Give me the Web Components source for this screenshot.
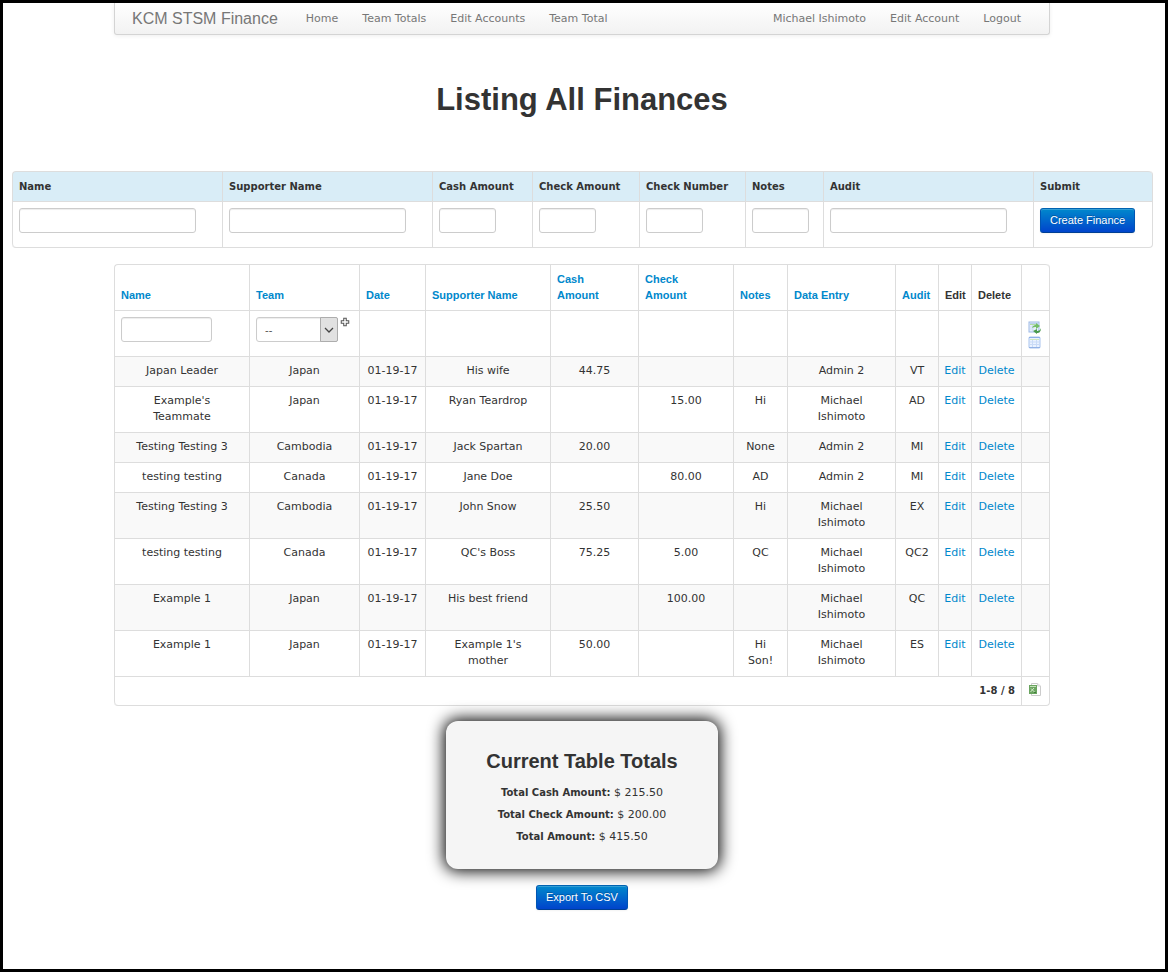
<!DOCTYPE html>
<html lang="en">
<head>
<meta charset="utf-8">
<title>KCM STSM Finance</title>
<style>
  html { background: #000; }
  body {
    margin: 0;
    font: 11px/16px "DejaVu Sans", sans-serif;
    color: #333;
  }
</style>
</head>
<body>
<finance-page>
  <nav-bar slot="nav" brand="KCM STSM Finance">
    <nav-link>Home</nav-link>
    <nav-link>Team Totals</nav-link>
    <nav-link>Edit Accounts</nav-link>
    <nav-link>Team Total</nav-link>
    <nav-link slot="account">Michael Ishimoto</nav-link>
    <nav-link slot="account">Edit Account</nav-link>
    <nav-link slot="account">Logout</nav-link>
  </nav-bar>
  <span slot="title">Listing All Finances</span>
  <finance-form></finance-form>
  <finance-grid></finance-grid>
  <totals-card>
    <span slot="title">Current Table Totals</span>
    <total-line label="Total Cash Amount:">$ 215.50</total-line>
    <total-line label="Total Check Amount:">$ 200.00</total-line>
    <total-line label="Total Amount:">$ 415.50</total-line>
  </totals-card>
  <primary-button>Export To CSV</primary-button>
</finance-page>

<script>
const base = `
  *, *::before, *::after { box-sizing: border-box; }
  a { color: #08c; text-decoration: none; }
`;
const tableStyles = `
  table {
    width: 100%;
    table-layout: fixed;
    border-collapse: separate;
    border-spacing: 0;
    border: 1px solid #ddd;
    border-left: 0;
    border-top: 0;
    border-radius: 4px;
  }
  th, td {
    padding: 6px 6px 7px;
    border-left: 1px solid #ddd;
    border-top: 1px solid #ddd;
    vertical-align: top;
  }
  th { text-align: left; }
  thead tr:first-child > :first-child { border-top-left-radius: 4px; }
  thead tr:first-child > :last-child { border-top-right-radius: 4px; }
  table > :last-child tr:last-child > :first-child { border-bottom-left-radius: 4px; }
  table > :last-child tr:last-child > :last-child { border-bottom-right-radius: 4px; }
  input, select {
    display: block;
    height: 25px;
    max-width: 100%;
    margin: 0;
    padding: 3px 5px;
    border: 1px solid #ccc;
    border-radius: 3px;
    background: #fff;
    box-shadow: inset 0 1px 1px rgba(0,0,0,.075);
    color: #555;
    font: 11px/16px "Liberation Sans", Arial, sans-serif;
  }
`;

class BaseElement extends HTMLElement {
  connectedCallback() {
    if (this.shadowRoot) return;
    this.attachShadow({ mode: "open" }).innerHTML =
      `<style>${base}${this.styles()}</style>${this.markup()}`;
  }
}

customElements.define("finance-page", class extends BaseElement {
  styles() { return `
    :host {
      display: flex;
      flex-direction: column;
      align-items: center;
      box-sizing: border-box;
      min-height: 100vh;
      padding: 0 13px 56px 9px;
      border: 3px solid #000;
      background: #fff;
    }
    h1 {
      margin: 45px 0 51px;
      font: bold 31px/40px "Liberation Sans", Arial, sans-serif;
    }
  `; }
  markup() { return `
    <slot name="nav"></slot>
    <h1><slot name="title"></slot></h1>
    <slot></slot>
  `; }
});

customElements.define("nav-bar", class extends BaseElement {
  styles() { return `
    :host { display: block; width: 100%; max-width: 936px; }
    nav {
      display: flex;
      align-items: center;
      height: 32px;
      padding: 0 28px 0 17px;
      border: 1px solid #d4d4d4;
      border-top: 0;
      border-radius: 0 0 3px 3px;
      background: linear-gradient(#fff, #f2f2f2);
      box-shadow: 0 1px 4px rgba(0,0,0,.065);
    }
    .brand {
      margin-right: 28px;
      color: #777;
      font: 16px/20px "Liberation Sans", Arial, sans-serif;
    }
    .links { display: flex; gap: 24px; }
    .account { margin-left: auto; }
  `; }
  markup() { return `
    <nav>
      <a class="brand" href="#">${this.getAttribute("brand")}</a>
      <div class="links"><slot></slot></div>
      <div class="links account"><slot name="account"></slot></div>
    </nav>
  `; }
});

customElements.define("nav-link", class extends BaseElement {
  styles() { return `:host { display: block; } a { color: #777; }`; }
  markup() { return `<a href="#"><slot></slot></a>`; }
});

customElements.define("primary-button", class extends BaseElement {
  styles() { return `
    :host { display: block; }
    button {
      display: block;
      height: 25px;
      padding: 0 9px 1px;
      border: 1px solid;
      border-color: #0063b1 #0055b3 #003f94;
      border-radius: 3px;
      background: linear-gradient(#08c, #04c);
      box-shadow: inset 0 1px 0 rgba(255,255,255,.2), 0 1px 2px rgba(0,0,0,.05);
      color: #fff;
      font: 11px/16px "Liberation Sans", Arial, sans-serif;
      text-shadow: 0 -1px 0 rgba(0,0,0,.25);
      white-space: nowrap;
    }
  `; }
  markup() { return `<button type="button"><slot></slot></button>`; }
});

const formFields = [
  ["Name", 210, "wide"],
  ["Supporter Name", 210, "wide"],
  ["Cash Amount", 100, "small"],
  ["Check Amount", 107, "small"],
  ["Check Number", 106, "small"],
  ["Notes", 78, "small"],
  ["Audit", 210, "wide"],
];

customElements.define("finance-form", class extends BaseElement {
  styles() { return `
    ${tableStyles}
    :host { display: block; width: 100%; margin-bottom: 16px; }
    form { margin: 0; }
    th {
      padding-top: 7px;
      padding-bottom: 6px;
      background: #d9edf7;
      font-size: 10px;
      white-space: nowrap;
    }
    td { padding-bottom: 14px; }
    .wide { width: 177px; }
    .small { width: 57px; }
  `; }
  markup() { return `
    <form>
      <table>
        <colgroup>
          ${formFields.map(f => `<col style="width:${f[1]}px">`).join("")}
          <col style="width:119px">
        </colgroup>
        <thead><tr>
          ${formFields.map((f, i) => `<th scope="col"><label for="f${i}">${f[0]}</label></th>`).join("")}
          <th scope="col">Submit</th>
        </tr></thead>
        <tbody><tr>
          ${formFields.map((f, i) => `<td><input type="text" id="f${i}" class="${f[2]}"></td>`).join("")}
          <td><primary-button>Create Finance</primary-button></td>
        </tr></tbody>
      </table>
    </form>
  `; }
});

const icons = {
  filter: `
    <rect x="1" y="1" width="10" height="10" fill="#e6effb" stroke="#9db9e6"/>
    <path d="M2 2h8v2H2z" fill="#b9d0f0"/>
    <path d="M2 3.500h6" stroke="#b4dba6"/>
    <path d="M2 6h4M2 8h4M4.500 4v6" stroke="#cfdff5" fill="none"/>
    <path d="M4 7C5 4 7 4 8 4V2l4 3-4 3V6C7 6 5 6 4 7z" fill="#74be68"/>
    <path d="M13 7c-1 3-3 3-4 3V8l-4 2 4 3v-1c2 0 4-1 4-5z" fill="#4a9a4c"/>`,
  reset: `
    <rect x="1" y="1" width="11" height="11" rx="1" fill="#eaf2ff" stroke="#a9c4ee"/>
    <path d="M1 1.500h11" stroke="#8db0e8"/>
    <path d="M2 3.500h9" stroke="#cfe6bf"/>
    <path d="M2 6h9M2 8.500h9M4.500 4v7M8.500 4v7" stroke="#c9dbf7" fill="none"/>
    <path d="M1 11.500h11" stroke="#93b3e6"/>`,
  excel: `
    <path d="M3.500 .5h6l3 2.500v9.500h-9z" fill="#fff" stroke="#ccc"/>
    <path d="M9.500 .5V3h3" fill="#eee" stroke="#d5d5d5"/>
    <rect x="1" y="2" width="8" height="9" fill="#6aa45f"/>
    <path d="M2 3h6v1H2z" fill="#c2dfb7"/>
    <path d="M2.500 9 6 5M3 5.500l4 4" stroke="#d5ebcd" fill="none"/>
    <path d="M6 9.500h2" stroke="#3f7d3a"/>`,
  plus: `<path d="M4.500 1.500h3v3h3v3h-3v3h-3v-3h-3v-3h3z" fill="#fff" stroke="#555" stroke-width="1.250"/>`,
  arrow: `<path d="M2 4 6 8l4-4" fill="none" stroke="#444" stroke-width="1.250"/>`,
};

customElements.define("app-icon", class extends BaseElement {
  styles() { return `
    :host { display: block; width: var(--icon-size, 13px); height: var(--icon-size, 13px); }
    svg { display: block; width: 100%; height: 100%; }
  `; }
  markup() {
    const name = this.getAttribute("name");
    const box = name === "plus" || name === "arrow" ? 12 : 13;
    return `<svg viewBox="0 0 ${box} ${box}" aria-hidden="true">${icons[name]}</svg>`;
  }
});

customElements.define("team-select", class extends BaseElement {
  styles() { return `
    ${tableStyles}
    :host { display: grid; width: 82px; }
    select, .arrow { grid-area: 1 / 1; }
    select { width: 82px; appearance: none; padding: 3px 8px; }
    .arrow {
      display: grid;
      place-items: center;
      justify-self: end;
      width: 18px;
      border: 1px solid #adadad;
      border-radius: 0 2px 2px 0;
      background: #e1e1e1;
      pointer-events: none;
      --icon-size: 12px;
    }
  `; }
  markup() { return `
    <select aria-label="Team">
      <option>--</option><option>Cambodia</option><option>Canada</option><option>Japan</option>
    </select>
    <span class="arrow"><app-icon name="arrow"></app-icon></span>
  `; }
});

const gridColumns = [
  ["Name", 135], ["Team", 110], ["Date", 66], ["Supporter Name", 125],
  ["Cash<br>Amount", 88], ["Check<br>Amount", 95], ["Notes", 54], ["Data Entry", 108],
  ["Audit", 43], ["Edit", 33], ["Delete", 50], ["", 28],
];
const michael = "Michael<br>Ishimoto";
const records = [
  ["Japan Leader", "Japan", "His wife", "44.75", "", "", "Admin 2", "VT"],
  ["Example's<br>Teammate", "Japan", "Ryan Teardrop", "", "15.00", "Hi", michael, "AD"],
  ["Testing Testing 3", "Cambodia", "Jack Spartan", "20.00", "", "None", "Admin 2", "MI"],
  ["testing testing", "Canada", "Jane Doe", "", "80.00", "AD", "Admin 2", "MI"],
  ["Testing Testing 3", "Cambodia", "John Snow", "25.50", "", "Hi", michael, "EX"],
  ["testing testing", "Canada", "QC's Boss", "75.25", "5.00", "QC", michael, "QC2"],
  ["Example 1", "Japan", "His best friend", "", "100.00", "", michael, "QC"],
  ["Example 1", "Japan", "Example 1's<br>mother", "50.00", "", "Hi<br>Son!", michael, "ES"],
];

customElements.define("finance-grid", class extends BaseElement {
  styles() { return `
    ${tableStyles}
    :host { display: block; width: 100%; max-width: 936px; }
    th {
      vertical-align: bottom;
      font: bold 11px/16px "Liberation Sans", Arial, sans-serif;
    }
    .filters td { height: 46px; }
    .filters input { width: 91px; }
    .team { display: flex; gap: 2px; --icon-size: 10px; }
    .tools { padding-top: 10px; padding-bottom: 0; }
    .tools a + a { display: block; margin-top: 2px; }
    .records td { padding-left: 5px; padding-right: 5px; text-align: center; }
    .records tr:nth-child(odd) td { background: #f9f9f9; }
    tfoot td { padding-bottom: 6px; }
    .pager { text-align: right; font-size: 10px; font-weight: bold; }
  `; }
  header([name]) {
    const linked = name && name !== "Edit" && name !== "Delete";
    return name ? `<th scope="col">${linked ? `<a href="#">${name}</a>` : name}</th>` : "<td></td>";
  }
  row(r) {
    const cells = [r[0], r[1], "01-19-17", ...r.slice(2),
      '<a href="#">Edit</a>', '<a href="#">Delete</a>', ""];
    return `<tr>${cells.map(c => `<td>${c}</td>`).join("")}</tr>`;
  }
  markup() { return `
    <table>
      <colgroup>${gridColumns.map(c => `<col style="width:${c[1]}px">`).join("")}</colgroup>
      <thead>
        <tr>${gridColumns.map(this.header).join("")}</tr>
        <tr class="filters">
          <td><input type="text" aria-label="Name"></td>
          <td><div class="team"><team-select></team-select><a href="#" aria-label="Select several teams"><app-icon name="plus"></app-icon></a></div></td>
          ${"<td></td>".repeat(9)}
          <td class="tools">
            <a href="#" aria-label="Filter"><app-icon name="filter"></app-icon></a>
            <a href="#" aria-label="Reset"><app-icon name="reset"></app-icon></a>
          </td>
        </tr>
      </thead>
      <tbody class="records">${records.map(this.row).join("")}</tbody>
      <tfoot><tr>
        <td class="pager" colspan="11">1-8 / 8</td>
        <td><a href="#" aria-label="Export to Excel"><app-icon name="excel"></app-icon></a></td>
      </tr></tfoot>
    </table>
  `; }
});

customElements.define("totals-card", class extends BaseElement {
  styles() { return `
    :host {
      display: block;
      box-sizing: border-box;
      width: 272px;
      max-width: 100%;
      margin: 15px 0 16px;
      padding: 28px 16px 21px;
      border-radius: 12px;
      background: #f5f5f5;
      box-shadow: 0 0 16px 2px #000;
      text-align: center;
    }
    h2 {
      margin: 0 0 9px;
      font: bold 20px/24px "Liberation Sans", Arial, sans-serif;
    }
  `; }
  markup() { return `<h2><slot name="title"></slot></h2><slot></slot>`; }
});

customElements.define("total-line", class extends BaseElement {
  styles() { return `
    :host { display: block; line-height: 22px; }
    b { font-size: 10px; }
  `; }
  markup() { return `<b>${this.getAttribute("label")}</b> <slot></slot>`; }
});
</script>
</body>
</html>
